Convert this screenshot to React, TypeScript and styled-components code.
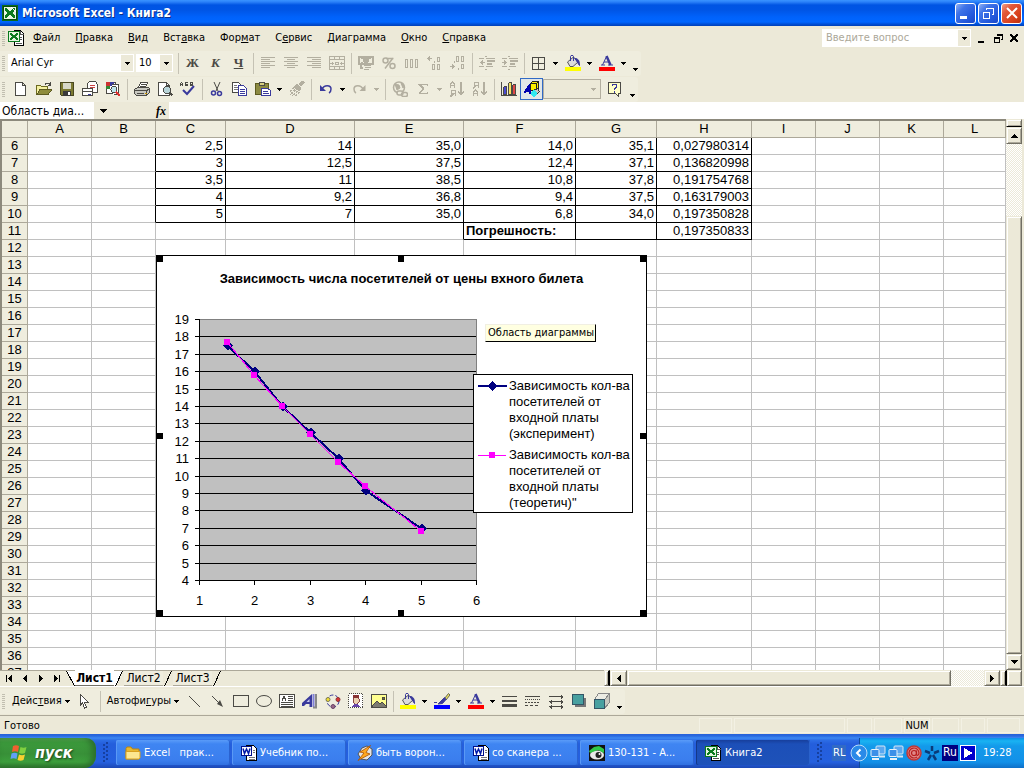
import React from 'react';
import styled, { createGlobalStyle } from 'styled-components';

const UI = '"DejaVu Sans Condensed", "DejaVu Sans", "Noto Sans", sans-serif';
const CELL = '"Liberation Sans", Arial, sans-serif';

const C = {
  face: '#ece9d8',
  bar: '#efedde',
  shadow: '#aca899',
  dark: '#716f64',
  off: '#b3afa0',
  ink: '#4b4a45',
  grid: '#c0c0c0',
};

const Global = createGlobalStyle`
  html, body, #root { height: 100%; }
  body { margin: 0; overflow: hidden; font: 11px/14px ${UI}; color: #000; background: ${C.face}; }
  *, *::before, *::after { box-sizing: border-box; }
  button, input, select { font: inherit; color: inherit; margin: 0; padding: 0; border: 0; border-radius: 0; background: transparent; }
  svg { display: block; flex: none; }
`;

const Screen = styled.div`
  display: flex;
  flex-direction: column;
  height: 100vh;
  min-height: 400px;
`;

/* ---------- title bar ---------- */

const TitleBar = styled.header`
  display: flex;
  align-items: center;
  height: 26px;
  flex: none;
  padding: 0 2px;
  gap: 4px;
  color: #fff;
  background: linear-gradient(#3a93ff 0, #2a80f8 2px, #0054e3 5px, #0055e5 10px, #0062fb 17px, #0066ff 22px, #0050d8 24px, #0040b8 26px);
`;

const AppTitle = styled.h1`
  flex: 1;
  margin: 0;
  font: bold 12px/16px ${UI};
  text-shadow: 1px 1px 0 #0a2f8a;
`;

const CaptionButtons = styled.div`
  display: flex;
  gap: 2px;
`;

const CaptionButton = styled.button<{ $close?: boolean }>`
  width: 21px;
  height: 21px;
  display: grid;
  place-items: center;
  border: 1px solid #fff;
  border-radius: 3px;
  background: ${(p) =>
    p.$close
      ? 'linear-gradient(135deg, #f0a088 0, #e2583a 30%, #d8401c 70%, #b83010)'
      : 'linear-gradient(135deg, #8fb0f4 0, #3f74e8 30%, #2459dc 70%, #1a48c8)'};
`;

/* ---------- menus and tool bars ---------- */

const MenuBar = styled.nav`
  display: flex;
  align-items: center;
  height: 24px;
  flex: none;
  padding: 0 2px;
`;

const Grip = styled.span<{ $gap?: number }>`
  width: 3px;
  height: 15px;
  margin-right: ${(p) => p.$gap ?? 3}px;
  flex: none;
  background: repeating-linear-gradient(#c1beb0 0 1px, transparent 1px 2px);
`;

const MenuButton = styled.button`
  padding: 0 7px 0 8px;
  line-height: 18px;
  white-space: nowrap;
`;

const Spacer = styled.span`
  flex: 1;
`;

const Ask = styled.div`
  display: flex;
  width: 149px;
  height: 18px;
  padding: 1px;
  background: #fff;
`;

const AskInput = styled.input`
  flex: 1;
  min-width: 0;
  padding-left: 3px;
  outline: 0;
  &::placeholder { color: ${C.shadow}; opacity: 1; }
`;

const ComboArrow = styled.span`
  width: 12px;
  display: grid;
  place-items: center;
  background: ${C.face};
`;

const BookButtons = styled.div`
  display: flex;
  align-items: center;
  margin-left: 3px;
`;

const BookButton = styled.button`
  width: 16px;
  height: 16px;
  display: grid;
  place-items: center;
`;

const ToolRow = styled.div`
  display: flex;
  align-items: center;
  height: 26px;
  flex: none;
  background: ${C.face};
`;

const DrawRow = styled(ToolRow)`
  height: 29px;
  border-bottom: 1px solid ${C.shadow};
`;

const ToolBar = styled.div`
  display: flex;
  align-items: center;
  height: 25px;
  padding-left: 2px;
  background: ${C.bar};
  border-radius: 0 3px 3px 0;
`;

const Sep = styled.span`
  width: 1px;
  height: 21px;
  margin: 0 2px 0 3px;
  flex: none;
  background: #c5c2b4;
`;

const Tool = styled.button<{ $off?: boolean; $on?: boolean }>`
  width: 23px;
  height: 22px;
  flex: none;
  display: grid;
  place-items: center;
  color: ${(p) => (p.$off ? C.off : C.ink)};
  border: 1px solid ${(p) => (p.$on ? '#316ac5' : 'transparent')};
  background: ${(p) => (p.$on ? '#e1e6e8' : 'transparent')};
`;

const DropTool = styled.button<{ $off?: boolean }>`
  width: 11px;
  height: 22px;
  flex: none;
  display: grid;
  place-items: center;
  color: ${(p) => (p.$off ? C.off : '#000')};
`;

const MoreTool = styled.button`
  width: 12px;
  height: 22px;
  flex: none;
  display: grid;
  place-items: end center;
  padding-bottom: 3px;
`;

const Letter = styled.span<{ $italic?: boolean; $under?: boolean }>`
  font: bold 13px/16px "Liberation Serif", "Times New Roman", serif;
  font-style: ${(p) => (p.$italic ? 'italic' : 'normal')};
  text-decoration: ${(p) => (p.$under ? 'underline' : 'none')};
`;

const Combo = styled.label<{ $w: number; $off?: boolean }>`
  display: flex;
  width: ${(p) => p.$w}px;
  height: ${(p) => (p.$off ? 20 : 18)}px;
  margin-right: 2px;
  padding: 1px;
  border: ${(p) => (p.$off ? `1px solid ${C.off}` : '0')};
  color: ${(p) => (p.$off ? C.off : '#000')};
  background: ${(p) => (p.$off ? C.face : '#fff')};
`;

const ComboSelect = styled.select`
  flex: 1;
  min-width: 0;
  padding-left: 2px;
  appearance: none;
  outline: 0;
`;

const TextTool = styled.button`
  display: flex;
  align-items: center;
  gap: 3px;
  height: 22px;
  padding: 0 4px;
  white-space: nowrap;
`;

/* ---------- formula bar ---------- */

const FormulaBar = styled.div`
  display: flex;
  height: 17px;
  flex: none;
  background: #fff;
`;

const NameBox = styled.input`
  width: 94px;
  padding-left: 2px;
  font-size: 12px;
  outline: 0;
`;

const FormulaTools = styled.div`
  display: flex;
  width: 75px;
  justify-content: space-between;
  align-items: center;
  padding-right: 3px;
  background: ${C.face};
`;

const NameDrop = styled.button`
  width: 18px;
  height: 17px;
  display: grid;
  place-items: center;
`;

const FxButton = styled.button`
  font: italic bold 12px/16px "Liberation Serif", serif;
`;

const FormulaInput = styled.input`
  flex: 1;
  min-width: 0;
  outline: 0;
`;

/* ---------- work sheet ---------- */

const SheetArea = styled.main`
  display: flex;
  flex: 1;
  min-height: 0;
  padding-right: 2px;
`;

const SheetView = styled.div`
  position: relative;
  flex: 1;
  min-width: 0;
  overflow: hidden;
  border: 0 solid ${C.dark};
  border-width: 2px 0 0 2px;
  border-top-color: #8c897c;
  border-left-color: #8c897c;
  background: #fff;
`;

const Grid = styled.table`
  width: 100%;
  table-layout: fixed;
  border-collapse: separate;
  border-spacing: 0;
  font: 13px/16px ${CELL};
`;

const Head = styled.th`
  height: 17px;
  padding: 0;
  font-weight: normal;
  line-height: 16px;
  background: ${C.bar};
  border: 0 solid ${C.shadow};
  border-width: 0 1px 1px 0;
`;

const Cell = styled.td<{ $right?: boolean; $bottom?: boolean; $bold?: boolean }>`
  height: 17px;
  padding: 0 2px;
  text-align: ${(p) => (p.$bold ? 'left' : 'right')};
  font-weight: ${(p) => (p.$bold ? 'bold' : 'normal')};
  white-space: nowrap;
  border: 0 solid;
  border-width: 0 1px 1px 0;
  border-color: transparent ${(p) => (p.$right ? '#000' : C.grid)} ${(p) => (p.$bottom ? '#000' : C.grid)} transparent;
`;

/* ---------- chart ---------- */

const ChartFrame = styled.figure`
  position: absolute;
  left: 154px;
  top: 134px;
  width: 491px;
  height: 362px;
  margin: 0;
  border: 1px solid #000;
  background: #fff;
`;

const ChartTitle = styled.figcaption`
  position: relative;
  padding-top: 15px;
  text-align: center;
  font: bold 13px/16px ${CELL};
`;

const PlotSvg = styled.svg`
  position: absolute;
  left: -1px;
  top: -1px;
  font: 13px ${CELL};
`;

const Legend = styled.ul`
  position: absolute;
  left: 316px;
  top: 118px;
  width: 160px;
  margin: 0;
  padding: 3px 0 1px 4px;
  display: grid;
  gap: 5px;
  list-style: none;
  border: 1px solid #000;
  background: #fff;
  font: 13px/16px ${CELL};
`;

const LegendItem = styled.li`
  display: flex;
  gap: 1px;
  white-space: pre-line;
`;

const Tip = styled.div`
  position: absolute;
  left: 328px;
  top: 68px;
  padding: 1px 1px 1px 2px;
  white-space: nowrap;
  border: 1px solid;
  border-color: #f1efe2 #000 #000 #f1efe2;
  background: #ffffe1;
`;

/* ---------- scroll bars ---------- */

const checker = `repeating-conic-gradient(#fff 0 25%, ${C.face} 0 50%) 0 0 / 2px 2px`;

const VScroll = styled.div`
  display: flex;
  flex-direction: column;
  width: 16px;
  flex: none;
  background: ${checker};
`;

const Raised = styled.span<{ $h?: number; $w?: number; $grow?: number }>`
  flex: ${(p) => (p.$grow ? `${p.$grow} 1 0` : 'none')};
  height: ${(p) => (p.$h ? `${p.$h}px` : 'auto')};
  width: ${(p) => (p.$w ? `${p.$w}px` : 'auto')};
  border: 1px solid;
  border-color: ${C.face} ${C.dark} ${C.dark} ${C.face};
  box-shadow: inset 1px 1px 0 #fff, inset -1px -1px 0 ${C.shadow};
  background: ${C.face};
`;

const VSplit = styled(Raised)`
  border-bottom: 1px solid #000;
`;

const ScrollButton = styled(Raised).attrs({ as: 'button' })`
  display: grid;
  place-items: center;
`;

const Track = styled.span<{ $grow: number }>`
  flex: ${(p) => p.$grow} 1 0;
`;

/* ---------- sheet tabs ---------- */

const TabRow = styled.div`
  display: flex;
  height: 17px;
  flex: none;
  padding-right: 2px;
  border-bottom: 1px solid #fff;
`;

const TabSide = styled.div`
  display: flex;
  width: 604px;
  min-width: 0;
  padding-left: 1px;
  border-top: 1px solid ${C.shadow};
`;

const NavButton = styled.button`
  width: 16px;
  height: 15px;
  display: grid;
  place-items: center;
`;

const Tab = styled.button<{ $on?: boolean }>`
  width: 39px;
  margin-top: ${(p) => (p.$on ? -1 : 0)}px;
  height: ${(p) => (p.$on ? 16 : 15)}px;
  font-size: 12px;
  line-height: 14px;
  font-weight: ${(p) => (p.$on ? 'bold' : 'normal')};
  white-space: nowrap;
  display: grid;
  place-items: center;
  background: ${(p) => (p.$on ? '#fff' : C.bar)};
  border-bottom: 1px solid ${(p) => (p.$on ? C.dark : C.shadow)};
`;

const HScroll = styled.div`
  display: flex;
  flex: 1;
  background: ${checker};
`;

const HSplit = styled(Raised)`
  border-right: 2px solid #000;
`;

/* ---------- status bar ---------- */

const StatusBar = styled.footer`
  display: flex;
  align-items: center;
  gap: 2px;
  height: 18px;
  flex: none;
  padding: 0 4px;
`;

const StatusText = styled.span`
  flex: 1;
  padding-top: 2px;
`;

const StatusCell = styled.span<{ $w: number }>`
  width: ${(p) => p.$w}px;
  height: 15px;
  line-height: 16px;
  text-align: center;
  box-shadow: inset 0 0 0 1px #f3f1e4;
`;

/* ---------- task bar ---------- */

const TaskBar = styled.div`
  display: flex;
  height: 34px;
  flex: none;
  color: #fff;
  background: linear-gradient(#2560d8 0, #2a6ae0 2px, #3c88f2 4px, #2d6ee6 6px, #245edc 10px, #2560df 28px, #1c48b4 34px);
`;

const StartButton = styled.button`
  display: flex;
  align-items: center;
  gap: 5px;
  width: 96px;
  height: 30px;
  margin-top: 4px;
  padding-left: 10px;
  border-radius: 0 10px 12px 0;
  font: italic bold 16px/24px ${UI};
  text-shadow: 1px 1px 2px #1b3f1b;
  background: linear-gradient(#5eac56 0, #3c9a3c 4px, #389038 16px, #3d9f3d 24px, #2c742c 30px);
  box-shadow: inset -4px 0 6px #2c6e2c;
`;

const Dots = styled.span`
  width: 20px;
  margin: 8px 0 4px;
  display: grid;
  place-items: center;
`;

const Tasks = styled.div`
  display: flex;
  gap: 2px;
  padding-top: 6px;
`;

const TaskButton = styled.button<{ $on?: boolean }>`
  display: flex;
  align-items: center;
  gap: 3px;
  width: 114px;
  height: 25px;
  padding-left: 9px;
  border-radius: 2px;
  white-space: pre;
  background: ${(p) =>
    p.$on
      ? 'linear-gradient(#173f9c, #1c4fb8 4px, #1e52b9)'
      : 'linear-gradient(#5a9bf8, #3f85f2 4px, #3b7eee 20px, #3070e0)'};
  box-shadow: inset 1px 0 0 ${(p) => (p.$on ? '#143888' : '#5a99f5')}, inset -1px 0 0 ${(p) => (p.$on ? '#2a62cc' : '#2a62d0')};
`;

const Lang = styled.span`
  align-self: center;
  padding: 1px;
  margin: 3px 0 0 2px;
  background: #316ac5;
`;

const Tray = styled.div`
  display: flex;
  align-items: center;
  gap: 2px;
  width: 165px;
  margin: 4px 0 0 auto;
  border-left: 1px solid #0e4a9c;
  background: linear-gradient(#0d8fe8, #19b3f2 3px, #139aea 8px, #1290e8 24px, #0f6fc8);
`;

const TrayToggle = styled.button`
  margin-left: -10px;
`;

const RuBadge = styled.span`
  width: 16px;
  height: 16px;
  line-height: 15px;
  font-size: 12px;
  text-align: center;
  background: #000080;
`;

const Clock = styled.time`
  margin-left: 5px;
`;

/* ---------- glyphs ---------- */

const Svg = ({ w = 16, h = 16, smooth, children }: { w?: number; h?: number; smooth?: boolean; children: React.ReactNode }) => (
  <svg width={w} height={h} viewBox={`0 0 ${w} ${h}`} fill="none" stroke="currentColor" shapeRendering={smooth ? 'auto' : 'crispEdges'} aria-hidden="true">
    {children}
  </svg>
);

const Down = () => (
  <Svg w={5} h={3}><path d="M0 0h5v1h-1v1h-1v1h-1v-1h-1v-1h-1z" fill="currentColor" stroke="none" /></Svg>
);
const DownWide = () => (
  <Svg w={7} h={4}><path d="M0 0h7v1h-1v1h-1v1h-1v1h-1v-1h-1v-1h-1v-1h-1z" fill="currentColor" stroke="none" /></Svg>
);
const Tri = ({ d, w, h }: { d: string; w: number; h: number }) => (
  <Svg w={w} h={h}><path d={d} fill="#000" stroke="none" /></Svg>
);

const ExcelLogo = () => (
  <Svg>
    <rect x="0" y="0" width="16" height="16" fill="#0a6b1a" stroke="none" />
    <rect x="1.5" y="1.5" width="13" height="13" fill="#e6f5e0" stroke="#064a10" />
    <path d="M3 4l9 8M4 4l9 8M12 4l-9 8M13 4l-9 8" stroke="#0a7a1e" strokeWidth="2" />
    <path d="M9 2l5 5" stroke="#fff" />
  </Svg>
);
const BookGlyph = () => (
  <Svg w={17} h={16}>
    <path d="M6.500 .5h6l3 3v12h-9z" fill="#fff" stroke="#000" />
    <path d="M12.500 1v3h3M12 7h2M12 9h2M8 13h6" stroke="#555" />
    <rect x=".5" y="1.500" width="11" height="10" fill="#e6f5e0" stroke="#0a7a1e" />
    <path d="M2 4l7 5M3 4l7 5M9 4l-7 5M10 4l-7 5" stroke="#0a7a1e" strokeWidth="1.500" />
  </Svg>
);
const WordGlyph = () => (
  <Svg>
    <path d="M5.500 .5h7l3 3v12h-10z" fill="#fff" stroke="#000" />
    <path d="M12 5h2M12 7h2M8 12h6M8 14h6" stroke="#777" />
    <rect x=".5" y="1.500" width="10" height="9" fill="#fff" stroke="#00108c" />
    <path d="M2 3.500l1.500 5L5.500 4l2 4.500L9 3.500" stroke="#0018a8" strokeWidth="1.500" shapeRendering="auto" />
  </Svg>
);

const lines = (ys: [number, number, number][]) => <path d={ys.map(([x, y, l]) => `M${x} ${y}.5h${l}`).join('')} />;

const I: Record<string, React.ReactNode> = {
  left: <Svg>{lines([[1, 2, 14], [1, 4, 9], [1, 6, 14], [1, 8, 9], [1, 10, 14], [1, 12, 9]])}</Svg>,
  center: <Svg>{lines([[1, 2, 14], [4, 4, 8], [1, 6, 14], [4, 8, 8], [1, 10, 14], [4, 12, 8]])}</Svg>,
  right: <Svg>{lines([[1, 2, 14], [6, 4, 9], [1, 6, 14], [6, 8, 9], [1, 10, 14], [6, 12, 9]])}</Svg>,
  merge: <Svg><path d="M.5 1.500h15v13h-15zM.5 4.500h15M.5 11.500h15M5.500 1v3M10.500 1v3M5.500 12v3M10.500 12v3M1 8h4M11 8h4M3.500 6.500v3M12.500 6.500v3M6.500 7.500h3v2h-3z" /></Svg>,
  money: <Svg><path d="M1 1.500h14v7H1z" strokeWidth="2" /><path d="M3 3h2M11 3h2M3 7h2" /><circle cx="8" cy="5" r="2.500" fill="currentColor" /><path d="M6 10.500h7M7 12.500h6M6 14.500h5M3 9v4h2" strokeWidth="1.500" /></Svg>,
  percent: <Svg smooth><circle cx="4.500" cy="5.500" r="2.500" strokeWidth="1.500" /><circle cx="11.500" cy="11" r="2.500" strokeWidth="1.500" /><path d="M5 3.500h7.500M12 3L4 13.500" strokeWidth="1.500" /></Svg>,
  zeros: <Svg><path d="M1.500 4.500h2v8h-2zM6.500 4.500h2v8h-2zM11.500 4.500h2v8h-2z" /></Svg>,
  incDec: <Svg><path d="M0 3.500h5M1.500 2v3M2.500 1v5M10.500 2.500h2v4h-2zM7 6v2M5.500 9.500h2v5h-2zM10.500 9.500h2v5h-2z" /></Svg>,
  decDec: <Svg><path d="M6.500 1.500h2v5h-2zM11.500 1.500h2v5h-2zM4 6v2M0 11.500h5M3.500 10v3M2.500 9v5M11.500 9.500h2v4h-2zM8 13v2" /></Svg>,
  outdent: <Svg>{lines([[6, 1, 2], [6, 14, 2]])}{lines([[0, 3, 5], [7, 3, 9], [0, 11, 5], [7, 11, 7]])}<path d="M8 6h8M8 9h5" strokeWidth="2" /><path d="M1 7.500h5M2.500 6v3M3.500 5v5" /></Svg>,
  indent: <Svg>{lines([[6, 1, 2], [6, 14, 2]])}{lines([[0, 3, 5], [7, 3, 9], [0, 11, 5], [7, 11, 7]])}<path d="M8 6h8M8 9h5" strokeWidth="2" /><path d="M0 7.500h5M3.500 6v3M2.500 5v5" /></Svg>,
  borders: <Svg><path d="M1.500 2.500h12v12h-12zM7.500 2v12M1 8.500h12" /></Svg>,
  bucket: <Svg smooth><path d="M2.500 7l6-5 4.500 5-5 4.500H5z" fill="#dcdcdc" stroke="#55555c" /><path d="M5.500 6V1.500c0-1.500 3-1.500 3 0V6" stroke="#3a3a9c" /><path d="M10 3.500c3 0 4.500 2 4.500 7l-2-3z" fill="#3a3a9c" stroke="#3a3a9c" /><rect x="0" y="12" width="16" height="4" fill="#ff0" stroke="none" /></Svg>,
  fontA: <Svg smooth><path d="M2 10h4M9 10h5M3.500 10L7.500 1.500M5 7h5" stroke="#3a3a9c" /><path d="M7.500 1l4 9" stroke="#3a3a9c" strokeWidth="2.500" /><rect x="0" y="12" width="16" height="4" fill="#f00" stroke="none" /></Svg>,
  brush: <Svg smooth><path d="M14.500 .5L16 2l-4 5-1.500-1.500z" fill="#e8e060" stroke="#444" strokeWidth=".8" /><path d="M10.500 4.500L12 6.500 8.500 10.500 4 11z" fill="#3a3a9c" stroke="#3a3a9c" /><path d="M0 9.500h3" stroke="#3a3a9c" /><rect x="0" y="12" width="16" height="4" fill="#00f" stroke="none" /></Svg>,
  blank: <Svg><path d="M2.500 1.500h7l3 3v10h-10zM9.500 1.500v3h3" fill="#fff" /></Svg>,
  open: <Svg><path d="M.5 13.500v-9h4l1 1h6v3" fill="#f4f0a0" stroke="#6c6a20" /><path d="M1 13.500l3-5h12l-4 5z" fill="#8e8c3c" stroke="#5c5a20" /><path d="M9 3.500c1-2 4-2 5 0M14.500 1v3M12 4h3" /></Svg>,
  save: <Svg><path d="M1.500 1.500h13v13h-12l-1-1z" fill="#7c7a32" stroke="#4a4820" /><path d="M4 2h8v6H4z" fill="#d8d8c8" stroke="none" /><path d="M4 10h8v5H4z" fill="#3a3a3a" stroke="none" /><path d="M9 11h2v3H9z" fill="#fff" stroke="none" /></Svg>,
  mail: <Svg><path d="M5.500 8V2.500l2-2h6l2 3V11h-5" fill="#fff" /><path d="M8 4h5M8 6h5" stroke="#c44" /><path d="M.5 7.500h10v7H.5zM.5 10.500h10" fill="#fff" /><path d="M6 13h3" stroke="#3a3a9c" /></Svg>,
  research: <Svg><path d="M1.500 1.500h9v11h-9z" fill="#fff" /><path d="M1 1h4v4H1z" fill="#c33" stroke="none" /><path d="M5 1h4v4H5z" fill="#3a3a9c" stroke="none" /><path d="M1 5h4v3H1z" fill="#383" stroke="none" /><path d="M6.500 3.500h7v10h-5" fill="#fff" /><circle cx="9" cy="8.500" r="3" fill="#bfe6ee" /><path d="M11 11l4 4" stroke="#d33" strokeWidth="2.500" /></Svg>,
  print: <Svg><path d="M4.500 6.500l2-5h7l-2 5z" fill="#fff" /><path d="M7 3h5M6 5h5" /><path d="M.5 8.500l3-2h11l1 1v4l-3 3h-10l-2-2z" fill="#c8c8c0" /><path d="M1 9.500h11v4M3 12h7" /><path d="M11 12h2" stroke="#c90" /><path d="M15 8l-3 2" /></Svg>,
  preview: <Svg><path d="M1.500 14.500v-13h8l3 3v10z" fill="#fff" /><path d="M9.500 1.500v3h3" /><circle cx="10" cy="9" r="3.500" fill="#b8d4d8" /><path d="M12.500 11.500l3 3" strokeWidth="2" /></Svg>,
  spell: <Svg><path d="M.5 5V2.500l1-1 1 1V5M0 3.500h3M5.500 1v4M5 1.500h3M5 3.500h2.500v1H5M10.500 1v4M10 1.500h2M10 3h2M10 4.500h2M12.500 1v4" /><path d="M3 9l4 4 7-8" stroke="#3a3a9c" strokeWidth="2" shapeRendering="auto" /></Svg>,
  cut: <Svg smooth><path d="M5 1l4 9M11 1L7 10" /><circle cx="4.500" cy="12" r="2" stroke="#3a3a9c" strokeWidth="1.500" /><circle cx="10.500" cy="12.500" r="2" stroke="#3a3a9c" strokeWidth="1.500" /></Svg>,
  copy: <Svg><path d="M.5 1.500h6l2 2v8h-8z" fill="#fff" /><path d="M2 4h3M2 6h5M2 8h5" stroke="#777" /><path d="M6.500 4.500h5l3 3v7h-8z" fill="#fff" stroke="#3a3a9c" /><path d="M8 8.500h5M8 10.500h5M8 12.500h5" stroke="#3a3a9c" /></Svg>,
  paste: <Svg><path d="M.5 2.500h13v11H.5z" fill="#8c8a42" stroke="#5c5a20" /><path d="M4.500 1.500h5v3h-5z" fill="#d8d080" /><path d="M6.500 7.500h6l3 2v5h-9z" fill="#fff" stroke="#3a3a9c" /><path d="M8 10.500h5M8 12.500h6" stroke="#3a3a9c" /></Svg>,
  painter: <Svg><path d="M15 1l-4 4M14 0l-4 4" strokeWidth="2" /><path d="M8 3l4 4-2 3-5-4z" fill="currentColor" /><path d="M5 7l-4 3M6 9l-5 5M8 10l-4 5M10 11l-3 4" strokeDasharray="2 1" strokeWidth="1.500" /></Svg>,
  undo: <Svg smooth><path d="M4 8c2-4.500 9-4.500 9 0 0 2-1 3.500-2 4" stroke="#3a3a9c" strokeWidth="1.500" /><path d="M2 4v6h6z" fill="#3a3a9c" stroke="none" /></Svg>,
  redo: <Svg smooth><path d="M11 8C9 3.500 2 3.500 2 8c0 2 1 3.500 2 4" strokeWidth="1.500" /><path d="M13.500 4v6h-6z" fill="currentColor" stroke="none" /></Svg>,
  link: <Svg smooth><circle cx="7" cy="6.500" r="5.500" strokeWidth="1.500" /><path d="M3 3l4 1 1 3-3 2zM9 2l3 3-1 2z" fill="currentColor" /><rect x="5" y="10" width="6" height="4" rx="2" strokeWidth="1.500" fill={C.bar} /><rect x="9.500" y="11.500" width="6" height="4" rx="2" strokeWidth="1.500" /></Svg>,
  sigma: <Svg><path d="M12.500 5V3.500h-8l4 4-4 5h8V11" strokeWidth="1.500" /></Svg>,
  sortAz: <Svg><path d="M1.500 7V3l2-2 2 2v4M1 4.500h5M6.500 15V9.500h-4v3h4M4 13l-3 3" strokeWidth="1.500" /><path d="M12 1v12M9 10.500l3 3 3-3" strokeWidth="1.500" /></Svg>,
  sortZa: <Svg><path d="M6.500 7V1.500h-4v3h4M4 5L1 7.500M1.500 15v-4l2-2 2 2v4M1 12.500h5" strokeWidth="1.500" /><path d="M12 1v12M9 10.500l3 3 3-3" strokeWidth="1.500" /></Svg>,
  chart: <Svg><path d="M.5 1v13.500H16" /><path d="M2.500 6.500l1-1h2v8h-3z" fill="#4a4ad0" /><path d="M7.500 2.500l1-1h2v12h-3z" fill="#f4e060" /><path d="M11.500 4.500l1-1h2v10h-3z" fill="#e04848" /></Svg>,
  drawing: <Svg><path d="M6.500 2.500l2-2h6v7l-2 2h-6z" fill="#fff200" stroke="#222" /><path d="M6.500 2.500h6v7M12.500 2.500l2-2" stroke="#222" /><path d="M0 12L5 5l1 8M2 10h4" stroke="#0000b0" strokeWidth="2" /><path d="M9.500 9.500l4-2 2 3-3 3z" fill="#c8c8c8" stroke="#333" /><path d="M7 11l3-2 3 2v3l-3 2-3-2z" fill="#30e8f0" stroke="none" /></Svg>,
  help: <Svg><path d="M1.500 1.500h12v11h-2v3l-3-3h-7z" fill="#ffffc8" /><path d="M5.500 5.500C5 2.500 10 2.500 9.500 5.500c0 1.500-2 1.500-2 3M7.500 9.500v2" stroke="#3a3a9c" strokeWidth="1.500" /></Svg>,
  pointer: <Svg><path d="M3.500 1.500l8 8h-4l2 5-2 .5-2-5-2 2z" fill="#fff" /></Svg>,
  line: <Svg smooth><path d="M2 3l11 11" /></Svg>,
  arrow: <Svg smooth><path d="M2 3l8 8" /><path d="M13 14L7 11l3-4z" fill="currentColor" stroke="none" /></Svg>,
  rect: <Svg><path d="M.5 2.500h15v11H.5z" /></Svg>,
  oval: <Svg smooth><ellipse cx="8" cy="8" rx="7.500" ry="5.500" /></Svg>,
  textBox: <Svg><path d="M.5 1.500h15v13H.5z" fill="#fff" /><path d="M3 7.500L5 3l2 4.500M4 5.500h2M9 3.500h5M9 5.500h5M9 7.500h5M2 9.500h12M2 11.500h12M2 13h12" /></Svg>,
  wordArt: <Svg smooth><path d="M0 10l10-9v13H7.500v-3H4l-2 2H0z" fill="#3a3a9c" stroke="none" /><path d="M4.500 9L7.500 6v3z" fill="#c8c8f0" stroke="none" /><path d="M11.500 1v13" stroke="#8080d8" strokeWidth="2" /><path d="M14 1v13.500h-3" stroke="#888" strokeWidth="2" /></Svg>,
  diagram: <Svg smooth><circle cx="8" cy="8" r="6" stroke="#3a3a9c" strokeDasharray="4 2" /><circle cx="3" cy="6.500" r="2" fill="#f4e030" stroke="#775" /><circle cx="13" cy="6.500" r="2" fill="#d33" stroke="#833" /><circle cx="8" cy="13.500" r="2" fill="#968" stroke="#646" /></Svg>,
  clip: <Svg><rect x=".5" y=".5" width="14" height="14" fill="#fff" strokeDasharray="1 1" /><path d="M5 3h5l1 3v3l-2 2H7L5 9z" fill="#ecd0b0" stroke="#844" /><path d="M5 3.500h6" stroke="#833" strokeWidth="2.500" /><path d="M4 14l2-3h4l2 3z" fill="#64a" stroke="none" /></Svg>,
  picture: <Svg><path d="M.5 1.500h15v13H.5z" fill="#ffff90" /><path d="M1 13l5-5 3 3 2-2 4 4v1H1z" fill="#7c7a70" /><path d="M11 4h2v2h-2z" fill="#7c7a32" /></Svg>,
  weight: <Svg><path d="M0 3.500h15" /><path d="M0 8h15" strokeWidth="2" /><path d="M0 12.500h15" strokeWidth="3" /></Svg>,
  dash: <Svg><path d="M0 3.500h15" /><path d="M0 6.500h15" strokeDasharray="1 1" /><path d="M0 9.500h15" strokeDasharray="2 1" /><path d="M0 12.500h15" strokeDasharray="3 2" /></Svg>,
  arrows: <Svg><path d="M1 3.500h14M13 1.500v4M1 8.500h14M3 6.500v4M13 6.500v4M14 7.500v2M14 2.500v2M2 7.500v2M1 13.500h14M3 11.500v4M13 11.500v4M2 12.500v2M14 12.500v2" /></Svg>,
  shadow: <Svg><path d="M4 5h11v9H4z" fill="#777" stroke="none" /><path d="M1.500 1.500h11v10h-11z" fill="#48a0a0" stroke="#356" /></Svg>,
  cube: <Svg><path d="M.5 6.500l4-6h11v9l-5 6H.5z" fill="#ececE4" stroke="#888" /><path d="M10.500 6.500l5-6v9l-5 6z" fill="#c8c8c0" stroke="#888" /><path d="M.5 6.500h10v9H.5z" fill="#48a0a0" stroke="#356" /></Svg>,
};

const A = ({ k, label, off, on }: { k: string; label: string; off?: boolean; on?: boolean }) => (
  <Tool type="button" aria-label={label} $off={off} $on={on}>{I[k]}</Tool>
);
const D = ({ label, off }: { label: string; off?: boolean }) => (
  <DropTool type="button" aria-label={label} $off={off}><Down /></DropTool>
);
const More = () => <MoreTool type="button" aria-label="Параметры панелей"><Down /></MoreTool>;

/* ---------- content ---------- */

const menus: [string, string, string][] = [
  ['', 'Ф', 'айл'], ['', 'П', 'равка'], ['', 'В', 'ид'], ['Вст', 'а', 'вка'], ['Фор', 'м', 'ат'],
  ['С', 'е', 'рвис'], ['', 'Д', 'иаграмма'], ['', 'О', 'кно'], ['', 'С', 'правка'],
];

const columns: [string, number | undefined][] = [
  ['A', 64], ['B', 64], ['C', 70], ['D', 129], ['E', 109], ['F', 112], ['G', 81], ['H', 95], ['I', 64], ['J', 64], ['K', 64], ['L', undefined],
];

const data: Record<number, Record<string, string>> = {
  6: { C: '2,5', D: '14', E: '35,0', F: '14,0', G: '35,1', H: '0,027980314' },
  7: { C: '3', D: '12,5', E: '37,5', F: '12,4', G: '37,1', H: '0,136820998' },
  8: { C: '3,5', D: '11', E: '38,5', F: '10,8', G: '37,8', H: '0,191754768' },
  9: { C: '4', D: '9,2', E: '36,8', F: '9,4', G: '37,5', H: '0,163179003' },
  10: { C: '5', D: '7', E: '35,0', F: '6,8', G: '34,0', H: '0,197350828' },
  11: { F: 'Погрешность:', H: '0,197350833' },
};
const rows = Array.from({ length: 32 }, (_, i) => i + 6);

const inTable = (row: number, col: string) =>
  (row <= 10 && 'CDEFGH'.includes(col)) || (row === 11 && 'FGH'.includes(col));
const hasRight = (row: number, col: string) =>
  inTable(row, col) || inTable(row, String.fromCharCode(col.charCodeAt(0) + 1));

const measured: [number, number][] = [[1.5, 17.5], [2, 16], [2.5, 14], [3, 12.5], [3.5, 11], [4, 9.2], [5, 7]];
const fitted: [number, number][] = [[1.5, 17.7], [2, 15.8], [2.5, 14], [3, 12.4], [3.5, 10.8], [4, 9.4], [5, 6.8]];

const PLOT = { x: 43, y: 64, w: 277, h: 261 };
const px = (v: number) => Math.round(PLOT.x + ((v - 1) / 5) * PLOT.w) + 0.5;
const py = (v: number) => Math.round(PLOT.y + ((19 - v) / 15) * PLOT.h) + 0.5;
const points = (s: [number, number][]) => s.map(([x, y]) => `${px(x)},${py(y)}`).join(' ');

const Plot = () => (
  <PlotSvg width="491" height="362" viewBox="0 0 491 362" shapeRendering="crispEdges" role="img" aria-label="График зависимости">
    <rect x={PLOT.x + 0.5} y={PLOT.y + 0.5} width={PLOT.w} height={PLOT.h} fill="#c0c0c0" stroke="#808080" />
    {Array.from({ length: 16 }, (_, i) => 19 - i).map((v) => (
      <g key={v}>
        <path d={v === 19 ? `M${PLOT.x - 4} ${py(v)}h4` : `M${PLOT.x - 4} ${py(v)}h${PLOT.w + 4}`} stroke="#000" />
        <text x={PLOT.x - 10} y={py(v) + 4.5} textAnchor="end">{v}</text>
      </g>
    ))}
    <path d={`M${PLOT.x + 0.5} ${PLOT.y}v${PLOT.h}`} stroke="#000" />
    {[1, 2, 3, 4, 5, 6].map((v) => (
      <g key={v}>
        <path d={`M${px(v)} ${PLOT.y + PLOT.h}v5`} stroke="#000" />
        <text x={px(v)} y="350" textAnchor="middle">{v}</text>
      </g>
    ))}
    <polyline points={points(measured)} fill="none" stroke="#000080" strokeWidth="2" />
    {measured.map(([x, y]) => (
      <path key={x} d={`M${px(x) - 5} ${py(y)}l5-5 5 5-5 5z`} fill="#000080" />
    ))}
    <polyline points={points(fitted)} fill="none" stroke="#f0f" />
    {fitted.map(([x, y]) => (
      <rect key={x} x={px(x) - 3.5} y={py(y) - 3.5} width="6" height="6" fill="#f0f" />
    ))}
    {[1, 242, 484].map((x) =>
      [1, 178, 355].map((y) => (x === 242 && y === 178 ? null : <rect key={`${x}-${y}`} x={x} y={y} width="6" height="6" />)),
    )}
  </PlotSvg>
);

const TabEdge = ({ kind }: { kind: 'first' | 'afterOn' | 'mid' | 'last' }) => (
  <Svg w={10} h={15}>
    {kind === 'first' && <path d="M1 0h9v15z" fill="#fff" stroke="none" />}
    {kind === 'afterOn' && <path d="M0 0h9L1 15H0z" fill="#fff" stroke="none" />}
    <path d={kind === 'first' ? 'M1.500 0l8 15' : 'M8.500 0l-7 15'} stroke="#000" />
  </Svg>
);

const tasks: { text: string; icon: React.ReactNode; on?: boolean }[] = [
  { text: 'Excel   прак...', icon: <Svg smooth><path d="M1 3.500l1-1.500h4l1.500 2H14v10H1z" fill="#e8b830" stroke="#b88410" /><path d="M1 14V6.500h14V13l-1 1z" fill="#fce690" stroke="#d8a020" /></Svg> },
  { text: 'Учебник по...', icon: <WordGlyph /> },
  { text: 'быть ворон...', icon: <Svg smooth><path d="M5 3l5-2 5 3v6l-5 5-6-1-3-5z" fill="#e4e4e4" stroke="#555" /><path d="M13.500 .5L3 7l4 1-6 7.500L13 9l-4-1.500z" fill="#ffa820" stroke="#a85000" strokeWidth=".8" /></Svg> },
  { text: 'со сканера ...', icon: <WordGlyph /> },
  { text: '130-131 - A...', icon: <Svg smooth><rect width="16" height="16" fill="#111" stroke="none" /><ellipse cx="8" cy="10" rx="7" ry="4.500" fill="#e8e8e8" stroke="none" /><circle cx="9.500" cy="10" r="3" fill="#222" stroke="none" /><circle cx="10.500" cy="9" r="1" fill="#fff" stroke="none" /><path d="M0 6l5-4 5-1 5 3v4L9 5 1 8z" fill="#30c848" stroke="none" /></Svg> },
  { text: 'Книга2', icon: <BookGlyph />, on: true },
];

const Computers = () => (
  <Svg smooth>
    <rect x="6" y="1" width="9" height="8" rx="1" fill="#5aa8f0" stroke="#d8e8f4" />
    <path d="M9 11.500h6" stroke="#d8e8f4" strokeWidth="2" />
    <rect x="1" y="4.500" width="8" height="7" rx="1" fill="#3c90e8" stroke="#e8f2fa" />
    <path d="M2 14h7" stroke="#e8f2fa" strokeWidth="2" />
  </Svg>
);

const DotColumn = () => (
  <Svg w={6} h={22}>
    {[0, 4, 8, 12, 16].map((y) => (
      <g key={y} stroke="none"><rect x="0" y={y + 2} width="2" height="2" fill="#1640a0" /><rect x="3" y={y} width="2" height="2" fill="#1640a0" /></g>
    ))}
  </Svg>
);

const statusCells: [string, number][] = [['', 33], ['', 111], ['', 25], ['', 28], ['NUM', 26], ['', 27], ['', 24], ['', 33]];

export default function App() {
  return (
    <Screen>
      <Global />
      <TitleBar>
        <ExcelLogo />
        <AppTitle>Microsoft Excel - Книга2</AppTitle>
        <CaptionButtons>
          <CaptionButton type="button" aria-label="Свернуть"><Svg w={11} h={11}><path d="M0 9.500h7" stroke="#fff" strokeWidth="3" /></Svg></CaptionButton>
          <CaptionButton type="button" aria-label="Восстановить"><Svg w={12} h={12}><path d="M3.500 3V1h7v6H9M3 1.500h8M.5 5h6v6h-6zM0 5.500h7" stroke="#fff" /></Svg></CaptionButton>
          <CaptionButton type="button" aria-label="Закрыть" $close><Svg w={12} h={12} smooth><path d="M1 1l10 10M11 1L1 11" stroke="#fff" strokeWidth="2" /></Svg></CaptionButton>
        </CaptionButtons>
      </TitleBar>

      <MenuBar>
        <Grip />
        <BookGlyph />
        {menus.map(([a, u, b]) => (
          <MenuButton type="button" key={a + u + b}>{a}<u>{u}</u>{b}</MenuButton>
        ))}
        <Spacer />
        <Ask>
          <AskInput aria-label="Вопрос" placeholder="Введите вопрос" />
          <ComboArrow><Down /></ComboArrow>
        </Ask>
        <BookButtons>
          <BookButton type="button" aria-label="Свернуть книгу"><Svg w={9} h={9}><path d="M0 8h6" stroke="#000" strokeWidth="2" /></Svg></BookButton>
          <BookButton type="button" aria-label="Восстановить книгу"><Svg w={9} h={9}><path d="M3.500 2V.5h5v5H7M3 1h6M.5 3.500h5v5h-5zM0 4h6" stroke="#000" /></Svg></BookButton>
          <BookButton type="button" aria-label="Закрыть книгу"><Svg w={8} h={8}><path d="M0 .5l7 7M1 .5l7 7M7 .5l-7 7M8 .5l-7 7" stroke="#000" /></Svg></BookButton>
        </BookButtons>
      </MenuBar>

      <ToolRow>
        <ToolBar>
          <Grip />
          <Combo $w={126}>
            <ComboSelect aria-label="Шрифт"><option>Arial Cyr</option></ComboSelect>
            <ComboArrow><Down /></ComboArrow>
          </Combo>
          <Combo $w={37}>
            <ComboSelect aria-label="Размер"><option>10</option></ComboSelect>
            <ComboArrow><Down /></ComboArrow>
          </Combo>
          <Sep />
          <Tool type="button" aria-label="Полужирный"><Letter>Ж</Letter></Tool>
          <Tool type="button" aria-label="Курсив"><Letter $italic>К</Letter></Tool>
          <Tool type="button" aria-label="Подчеркнутый"><Letter $under>Ч</Letter></Tool>
          <Sep />
          <A k="left" label="По левому краю" off />
          <A k="center" label="По центру" off />
          <A k="right" label="По правому краю" off />
          <A k="merge" label="Объединить" off />
          <Sep />
          <A k="money" label="Денежный формат" off />
          <A k="percent" label="Процентный формат" off />
          <A k="zeros" label="Формат с разделителями" off />
          <A k="incDec" label="Увеличить разрядность" off />
          <A k="decDec" label="Уменьшить разрядность" off />
          <Sep />
          <A k="outdent" label="Уменьшить отступ" off />
          <A k="indent" label="Увеличить отступ" off />
          <Sep />
          <A k="borders" label="Границы" />
          <D label="Виды границ" />
          <A k="bucket" label="Цвет заливки" />
          <D label="Цвета заливки" />
          <A k="fontA" label="Цвет шрифта" />
          <D label="Цвета шрифта" />
          <More />
        </ToolBar>
      </ToolRow>

      <ToolRow>
        <ToolBar>
          <Grip $gap={4} />
          <A k="blank" label="Создать" />
          <A k="open" label="Открыть" />
          <A k="save" label="Сохранить" />
          <A k="mail" label="Сообщение" />
          <A k="research" label="Поиск" />
          <Sep />
          <A k="print" label="Печать" />
          <A k="preview" label="Предварительный просмотр" />
          <A k="spell" label="Орфография" />
          <Sep />
          <A k="cut" label="Вырезать" />
          <A k="copy" label="Копировать" />
          <A k="paste" label="Вставить" />
          <D label="Параметры вставки" />
          <A k="painter" label="Формат по образцу" off />
          <Sep />
          <A k="undo" label="Отменить" />
          <D label="Список отмены" />
          <A k="redo" label="Вернуть" off />
          <D label="Список возврата" off />
          <Sep />
          <A k="link" label="Гиперссылка" off />
          <A k="sigma" label="Автосумма" off />
          <D label="Функции" off />
          <A k="sortAz" label="По возрастанию" off />
          <A k="sortZa" label="По убыванию" off />
          <Sep />
          <A k="chart" label="Мастер диаграмм" />
          <A k="drawing" label="Рисование" on />
          <Combo $w={58} $off>
            <ComboSelect aria-label="Масштаб" disabled />
            <ComboArrow><Down /></ComboArrow>
          </Combo>
          <A k="help" label="Справка" />
          <More />
        </ToolBar>
      </ToolRow>

      <FormulaBar>
        <NameBox aria-label="Имя" defaultValue="Область диа..." />
        <FormulaTools>
          <NameDrop type="button" aria-label="Список имен"><DownWide /></NameDrop>
          <FxButton type="button">fx</FxButton>
        </FormulaTools>
        <FormulaInput aria-label="Строка формул" />
      </FormulaBar>

      <SheetArea>
        <SheetView>
          <Grid>
            <colgroup>
              <col width={26} />
              {columns.map(([c, w]) => <col key={c} width={w} />)}
            </colgroup>
            <thead>
              <tr>
                <Head aria-label="Выделить все" />
                {columns.map(([c]) => <Head key={c} scope="col">{c}</Head>)}
              </tr>
            </thead>
            <tbody>
              {rows.map((r) => (
                <tr key={r}>
                  <Head scope="row">{r}</Head>
                  {columns.map(([c]) => (
                    <Cell key={c} $right={hasRight(r, c)} $bottom={inTable(r, c) || inTable(r + 1, c)} $bold={r === 11 && c === 'F'}>
                      {data[r]?.[c]}
                    </Cell>
                  ))}
                </tr>
              ))}
            </tbody>
          </Grid>
          <ChartFrame>
            <Plot />
            <ChartTitle>Зависимость числа посетителей от цены вхного билета</ChartTitle>
            <Legend>
              <LegendItem>
                <Svg w={30} h={16}><path d="M0 8h29" stroke="#000080" strokeWidth="2" /><path d="M9.500 8l5-5 5 5-5 5z" fill="#000080" stroke="none" /></Svg>
                {'Зависимость кол-ва\nпосетителей от\nвходной платы\n(эксперимент)'}
              </LegendItem>
              <LegendItem>
                <Svg w={30} h={16}><path d="M0 8.500h28" stroke="#f0f" /><path d="M11 5h6v6h-6z" fill="#f0f" stroke="none" /></Svg>
                {'Зависимость кол-ва\nпосетителей от\nвходной платы\n(теоретич)"'}
              </LegendItem>
            </Legend>
            <Tip role="tooltip">Область диаграммы</Tip>
          </ChartFrame>
        </SheetView>
        <VScroll>
          <VSplit $h={8} />
          <ScrollButton $h={17} aria-label="Вверх"><Tri w={7} h={4} d="M3 0h1v1h1v1h1v1h1v1H0V3h1V2h1V1h1z" /></ScrollButton>
          <Track $grow={72} />
          <Raised $grow={438} />
          <ScrollButton $h={16} aria-label="Вниз"><Tri w={7} h={4} d="M0 0h7v1H6v1H5v1H4v1H3V3H2V2H1V1H0z" /></ScrollButton>
        </VScroll>
      </SheetArea>

      <TabRow>
        <TabSide>
          <NavButton aria-label="Первый лист"><Tri w={6} h={7} d="M0 0h1v7H0zM5 0h1v7H5V6H4V5H3V4H2V3h1V2h1V1h1z" /></NavButton>
          <NavButton aria-label="Предыдущий лист"><Tri w={4} h={7} d="M3 0h1v7H3V6H2V5H1V4H0V3h1V2h1V1h1z" /></NavButton>
          <NavButton aria-label="Следующий лист"><Tri w={4} h={7} d="M0 0h1v1h1v1h1v1h1v1H3v1H2v1H1v1H0z" /></NavButton>
          <NavButton aria-label="Последний лист"><Tri w={6} h={7} d="M0 0h1v1h1v1h1v1h1v1H3v1H2v1H1v1H0zM5 0h1v7H5z" /></NavButton>
          <TabEdge kind="first" />
          <Tab $on>Лист1</Tab>
          <TabEdge kind="afterOn" />
          <Tab>Лист2</Tab>
          <TabEdge kind="mid" />
          <Tab>Лист3</Tab>
          <TabEdge kind="last" />
        </TabSide>
        <HScroll>
          <HSplit $w={6} />
          <ScrollButton $w={17} aria-label="Влево"><Tri w={4} h={7} d="M3 0h1v7H3V6H2V5H1V4H0V3h1V2h1V1h1z" /></ScrollButton>
          <Raised $grow={324} />
          <Track $grow={33} />
          <ScrollButton $w={16} aria-label="Вправо"><Tri w={4} h={7} d="M0 0h1v1h1v1h1v1h1v1H3v1H2v1H1v1H0z" /></ScrollButton>
          <HSplit $w={7} />
          <Raised $w={15} />
        </HScroll>
      </TabRow>

      <DrawRow>
        <ToolBar>
          <Grip />
          <TextTool type="button"><span>Дейс<u>т</u>вия</span><Down /></TextTool>
          <A k="pointer" label="Выбор объектов" />
          <Sep />
          <TextTool type="button"><span>Автофи<u>г</u>уры</span><Down /></TextTool>
          <A k="line" label="Линия" />
          <A k="arrow" label="Стрелка" />
          <A k="rect" label="Прямоугольник" />
          <A k="oval" label="Овал" />
          <A k="textBox" label="Надпись" />
          <A k="wordArt" label="Объект WordArt" />
          <A k="diagram" label="Схема" />
          <A k="clip" label="Картинка" />
          <A k="picture" label="Рисунок" />
          <Sep />
          <A k="bucket" label="Заливка фигуры" />
          <D label="Цвета заливки фигуры" />
          <A k="brush" label="Цвет линий" />
          <D label="Цвета линий" />
          <A k="fontA" label="Цвет текста" />
          <D label="Цвета текста" />
          <A k="weight" label="Тип линии" />
          <A k="dash" label="Тип штриха" />
          <A k="arrows" label="Вид стрелки" />
          <A k="shadow" label="Тень" />
          <A k="cube" label="Объем" />
          <More />
        </ToolBar>
      </DrawRow>

      <StatusBar>
        <StatusText>Готово</StatusText>
        {statusCells.map(([t, w], i) => <StatusCell key={i} $w={w}>{t}</StatusCell>)}
      </StatusBar>

      <TaskBar>
        <StartButton type="button">
          <Svg w={20} h={18} smooth>
            <g stroke="none">
              <path d="M3 2c2-1 4-1 6 0L8 8C6 7 4 7 2 8z" fill="#f06030" />
              <path d="M10.500 3c2 1 4 1 6 0l-1.500 6c-2 1-4 1-6 0z" fill="#80d040" />
              <path d="M1.500 9.500c2-1 4-1 6 0L6.500 15c-2-1-4-1-6 0z" fill="#60a0f8" />
              <path d="M9 10.500c2 1 4 1 6 0L13.500 16c-2 1-4 1-6 0z" fill="#f8d030" />
            </g>
          </Svg>
          пуск
        </StartButton>
        <Dots><DotColumn /></Dots>
        <Tasks>
          {tasks.map((t) => <TaskButton type="button" key={t.text} $on={t.on}>{t.icon}{t.text}</TaskButton>)}
        </Tasks>
        <Dots><DotColumn /></Dots>
        <Lang>RL</Lang>
        <Tray>
          <TrayToggle type="button" aria-label="Скрытые значки">
            <Svg w={18} h={18} smooth><circle cx="9" cy="9" r="8" fill="#2a8ae8" stroke="#b8dcf8" /><path d="M10.500 5.500L7 9l3.500 3.500" stroke="#fff" strokeWidth="2" /></Svg>
          </TrayToggle>
          <Computers />
          <Computers />
          <Svg smooth><circle cx="8" cy="8" r="7" fill="#e08888" stroke="#c03838" strokeWidth="1.500" /><circle cx="8" cy="8" r="2.500" stroke="#b82020" strokeWidth="1.200" /><path d="M10.500 5.500v4c0 1.500 2.500 1 2.500-1.500a5 5 0 1 0-2 4" stroke="#b82020" strokeWidth="1.200" /></Svg>
          <Svg smooth><path d="M8 1v5M1 6l5 2M15 6l-5 2M4 15l3-5M12 15l-3-5" stroke="#0a3a78" strokeWidth="2.500" /></Svg>
          <RuBadge>Ru</RuBadge>
          <Svg><rect width="16" height="16" fill="#fff" stroke="none" /><rect x="1" y="1" width="14" height="14" fill="#00c" stroke="none" /><path d="M4 3l9 5-9 5z" fill="#fff" stroke="none" /></Svg>
          <Clock>19:28</Clock>
        </Tray>
      </TaskBar>
    </Screen>
  );
}
